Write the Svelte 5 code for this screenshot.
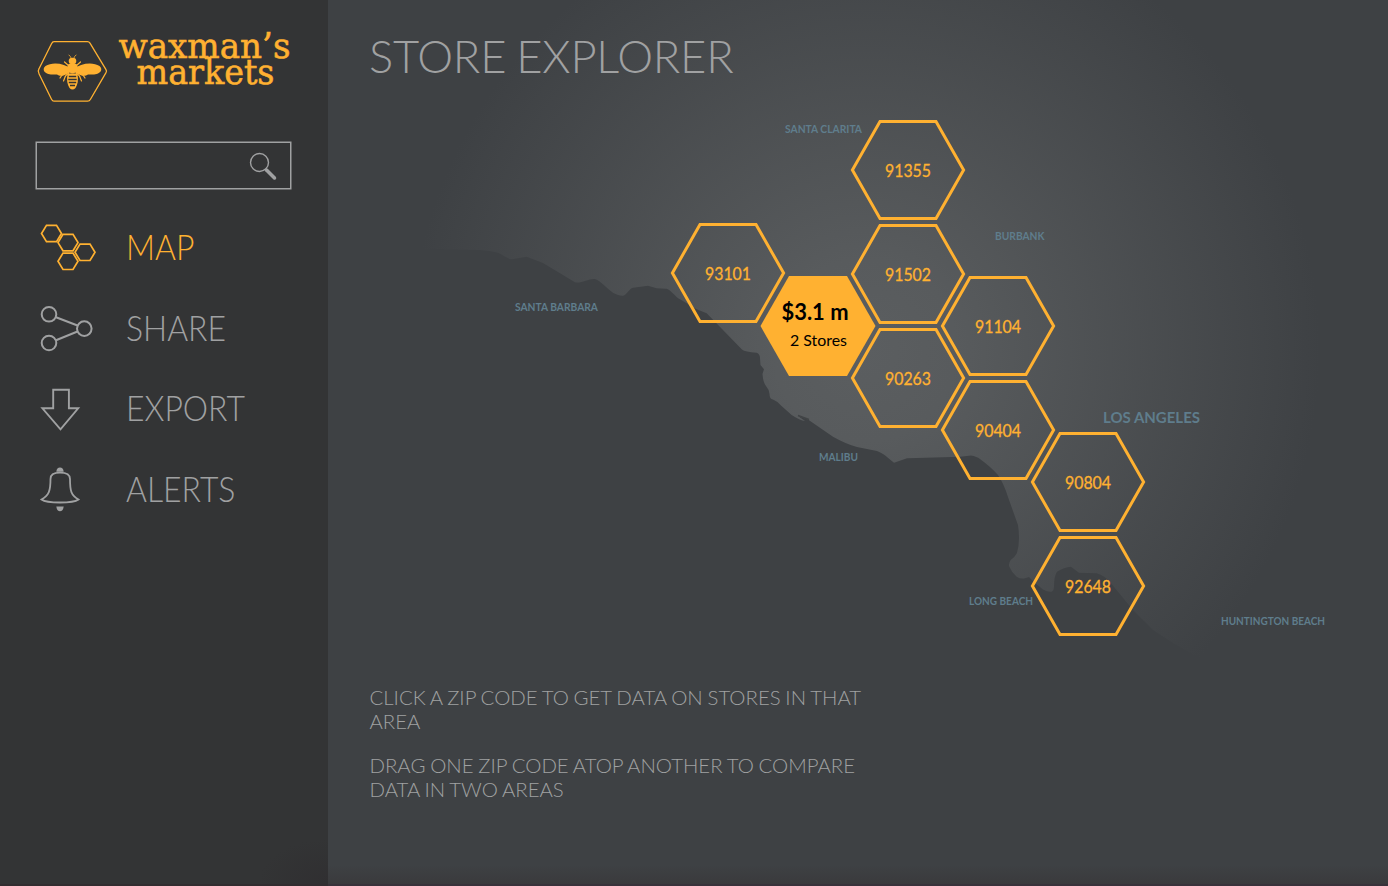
<script>
  const nav = [
    { id: 'map', label: 'MAP' },
    { id: 'share', label: 'SHARE' },
    { id: 'export', label: 'EXPORT' },
    { id: 'alerts', label: 'ALERTS' }
  ];
  const zips = [
    { zip: '93101', x: 728, y: 273 },
    { zip: '91355', x: 908, y: 170 },
    { zip: '91502', x: 908, y: 274 },
    { zip: '91104', x: 998, y: 326 },
    { zip: '90263', x: 908, y: 378 },
    { zip: '90404', x: 998, y: 430 },
    { zip: '90804', x: 1088, y: 482 },
    { zip: '92648', x: 1088, y: 586 }
  ];
  const cities = [
    { name: 'SANTA CLARITA', x: 785, y: 132.5, w: 77, s: 10.5 },
    { name: 'BURBANK', x: 995, y: 239.5, w: 49.5, s: 10.5 },
    { name: 'SANTA BARBARA', x: 515, y: 311, w: 83, s: 10.5 },
    { name: 'MALIBU', x: 819, y: 461, w: 39, s: 11 },
    { name: 'LONG BEACH', x: 969, y: 604.5, w: 64, s: 10.5 },
    { name: 'LOS ANGELES', x: 1103, y: 423, w: 97, s: 15 },
    { name: 'HUNTINGTON BEACH', x: 1221, y: 625, w: 104, s: 10.5 }
  ];
  let active = $state('map');
</script>

<div class="app">
  <aside>
    <svg class="logo" viewBox="0 0 260 82" width="260" height="82">
      <path d="M18 19H51.5Q53 19 54 20.5L70 47Q71 48.500 70 50L54.500 76.500Q53.500 78.500 51.500 78.500H18Q16.500 78.500 15.500 76.500L3 51Q1.500 48.500 3 46L15.500 21Q16.500 19 18 19Z" transform="translate(0 .7)" fill="none" stroke="#ffb131" stroke-width="1.300" />
      <g transform="translate(0 .5)">
        <g fill="#ffb131">
          <path d="M36 46.500C28 40.500 16 39 9.500 43.500C6.500 46 7.500 49.500 11 51C15 53 19 51.500 21 52C25 55 31 52.500 36 48Z" />
          <path d="M37 46.500C45 40.500 57 39 63.500 43.500C66.500 46 65.500 49.500 62 51C58 53 54 51.500 52 52C48 55 42 52.500 37 48Z" />
          <ellipse cx="36.500" cy="38.500" rx="3.800" ry="3.200" />
          <path d="M32 42Q36.500 39.500 41 42Q43 48 38.500 50.500H34.500Q30 48 32 42Z" />
          <path d="M31.500 51.500Q36.500 50 41.500 51.500Q43 60 39.500 65.500Q36.500 68.500 33.500 65.500Q30 60 31.500 51.500Z" />
        </g>
        <g fill="none" stroke="#333435" stroke-width="1.300"><path d="M32.800 54H40.200M32.300 57H40.700M32.800 60H40.200M34 63H39" /></g>
        <g fill="none" stroke="#ffb131" stroke-width="1.200" stroke-linecap="round">
          <path stroke-width=".8" d="M35.500 36.500Q35 34 33 32.500M37.500 36.500Q38 34 40 32.500" />
          <path d="M32.500 43L28.500 39.500M40.500 43L44.500 39.500M32 49Q26.500 51 24 55.500M41 49Q46.500 51 49 55.500M33 50.500Q29 53 28.500 56L27.500 58.500M40 50.500Q44 53 44.500 56L45.500 58.500" />
        </g>
      </g>
      <g class="wordmark">
        <text x="82.500" y="35.500" textLength="172" lengthAdjust="spacingAndGlyphs">waxman’s</text>
        <text x="100.500" y="62" textLength="138" lengthAdjust="spacingAndGlyphs">markets</text>
      </g>
    </svg>

    <label class="search">
      <input type="text" aria-label="Search" />
      <svg width="30" height="30" viewBox="0 0 30 30" fill="none" stroke="#a0a1a2">
        <circle cx="11.500" cy="11.500" r="9" stroke-width="1.400" />
        <path d="M18.500 19L26.500 27" stroke-width="3.500" stroke-linecap="round" />
      </svg>
    </label>

    <nav>
      {#each nav as item}
        <button class:active={active === item.id} onclick={() => (active = item.id)}>
          <svg width="60" height="50" viewBox="0 0 60 50" fill="none" stroke="currentColor">
            {#if item.id === 'map'}
              <g stroke-width="1.700">
                {#each [[12.500, 12.500], [29, 21.600], [46, 31.300], [29, 40.300]] as [x, y]}
                  <path transform="translate({x} {y})" d="M-5 -8.200H5L10 0L5 8.200H-5L-10 0Z" />
                {/each}
              </g>
            {:else if item.id === 'share'}
              <g stroke-width="2">
                <circle cx="10" cy="12.300" r="7.300" />
                <circle cx="45.300" cy="26.600" r="7.300" />
                <circle cx="10" cy="41" r="7.300" />
                <path d="M17 15.300L38.500 23.500M17 38.200L38.500 29.500" />
              </g>
            {:else if item.id === 'export'}
              <path stroke-width="1.900" d="M14.200 7.800H29.900V26.300H39.200L21.500 47.300L3.400 26.300H14.200Z" />
            {:else}
              <path stroke-width="1.800" d="M21 9.700C14 9.700 11.500 12 11.500 16C11.500 28 10 32 2.500 36.500C8 40.500 34 40.500 39.500 36.500C32 32 31 28 31 16C31 12 28 9.700 21 9.700Z" />
              <path fill="currentColor" stroke="none" d="M17.300 8.700Q17.800 4.500 21 4.500T24.700 8.700ZM17.300 43.500H24.700Q24 48.300 21 48.300T17.300 43.500Z" />
            {/if}
          </svg>
          <span>{item.label}</span>
        </button>
      {/each}
    </nav>
  </aside>

  <main>
    <svg class="map" viewBox="328 0 1060 886" width="1060" height="886">
      <defs>
        <radialGradient id="glow" gradientUnits="userSpaceOnUse" cx="865" cy="350" r="455">
          <stop offset="0" stop-color="#5b5e60" />
          <stop offset=".2" stop-color="#585b5d" />
          <stop offset="1" stop-color="#3e4144" />
        </radialGradient>
      </defs>
      <path fill="url(#glow)" d="M328 249H427L480 250Q490 250.500 498 252.700C503 255 507 258.500 511.700 259.300L526.700 256.700L543 263L575 282.300C582 283.500 589 278 595 279C601 281 606 288 613 292.700Q619 296 623 295.700C627 295 629 288.500 633 287.700L648 285.700L656.700 288.300L666.700 288.700C671 290 675 296.500 680 299.300L696.700 309.300L706.700 313.300L742 349.500Q745 352 756.700 352.700Q760 354 760 358L760.500 365L764 369.300L762.500 374Q763 382 766 386Q769.500 390 769.500 394Q769.500 399 773 399.500Q777 401 781 405.500L791.700 415Q800 420.500 805 421L798 416L808 419.500L833 436.700Q846 444 857 447L877 451Q884 454 887 457L894 462.700L907 458.300L960 456.700L971 455.500Q977 456.500 980 459Q991 467 998 475Q1004 484 1008 497L1018 525Q1020.500 541 1017 553Q1015 557 1010.700 560Q1008 564 1009.500 567Q1012 573 1016.700 576.700Q1020 579 1024 578.500L1029 577L1035 583Q1040 587 1043 589.500Q1049 592.500 1052 591.500Q1054 590 1054 586.700Q1054 576 1057 571.700Q1064 567 1071 566.700L1079 572.700L1096.700 573.300Q1105 576 1110 582L1133 610L1153 630L1173 643L1197 656.700L1230 675H1388V0H328Z" />
      <path d="M798 415.500L809 419.500" stroke="#414446" stroke-width="1.500" />
      <g class="cities">
        {#each cities as c}
          <text x={c.x} y={c.y} font-size={c.s} textLength={c.w} lengthAdjust="spacingAndGlyphs">{c.name}</text>
        {/each}
      </g>
      {#each zips as z}
        <g class="hex" transform="translate({z.x} {z.y})">
          <path d="M-28 -48.500H28L55.600 0L28 48.500H-28L-55.600 0Z" />
          <text y="6.500" textLength="46" lengthAdjust="spacingAndGlyphs">{z.zip}</text>
        </g>
      {/each}
      <g class="selected" transform="translate(818 326)">
        <path d="M-29 -50H29L57.500 0L29 50H-29L-57.500 0Z" />
        <text class="sales" x="-3" y="-6" textLength="67" lengthAdjust="spacingAndGlyphs">$3.1 m</text>
        <text class="stores" x="0.500" y="20" textLength="57" lengthAdjust="spacingAndGlyphs">2 Stores</text>
      </g>
    </svg>
    <h1>STORE EXPLORER</h1>
    <section class="help">
      <p>CLICK A ZIP CODE TO GET DATA ON STORES IN THAT AREA</p>
      <p>DRAG ONE ZIP CODE ATOP ANOTHER TO COMPARE DATA IN TWO AREAS</p>
    </section>
  </main>
</div>

<style>
  :global(body) { margin: 0; background: #3e4144; }
  .app { display: flex; width: 1388px; height: 886px; overflow: hidden; font-family: Lato, sans-serif; }
  aside { flex: none; box-sizing: border-box; width: 328px; padding: 22px 36px 0; background: radial-gradient(ellipse 70px 45px at 328px 884px, #302f31, #333435) #333435; display: flex; flex-direction: column; border-bottom: 2px solid #322d30; }
  .logo { display: block; flex: none; overflow: visible; }
  .wordmark { font-family: "DejaVu Serif", serif; font-size: 36px; fill: #ffb131; stroke: #ffb131; stroke-width: .6; }
  .search { box-sizing: border-box; display: flex; align-items: center; width: 255px; height: 47px; margin-top: 38px; margin-bottom: 1px; padding-right: 12px; border: 1px solid #a0a1a2; box-shadow: 0 0 0 .5px #a0a1a2; }
  input { flex: 1; min-width: 0; height: 100%; padding: 0 12px; border: 0; outline: 0; background: none; color: #a0a1a2; font: 300 20px Lato, sans-serif; }
  nav { display: flex; flex-direction: column; margin-top: 31px; }
  button { display: flex; align-items: flex-start; gap: 27.500px; height: 80.700px; padding: 0 0 0 2.500px; border: 0; background: none; color: #a0a1a2; text-align: left; font: 300 35px/50px Lato, sans-serif; }
  button svg { flex: none; }
  button span { transform: scaleX(.912); transform-origin: left; }
  button.active { color: #ffb131; }
  main { position: relative; box-sizing: border-box; flex: 1; display: flex; flex-direction: column; padding: 29px 42px 0; color: #a0a1a2; background: linear-gradient(#3e4144 0 865px, #3a3a3c 884px, #38323a 884px); }
  .map { position: absolute; inset: 0; clip-path: inset(0 0 30px 0); }
  h1 { position: relative; margin: 0 0 0 -1px; font: 300 45.300px/54px Lato, sans-serif; letter-spacing: -.2px; word-spacing: -2px; }
  .help { position: relative; width: 510px; margin: 602px 0 0 -.5px; font: 300 20.400px/24px Lato, sans-serif; word-spacing: -.8px; }
  p { margin: 0 0 20px; }
  .cities { fill: #5f7d8c; font-weight: 700; }
  .hex path { fill: none; stroke: #ffb131; stroke-width: 3; }
  .hex text { fill: #ffb131; stroke: #ffb131; stroke-width: .3; font-size: 17px; text-anchor: middle; }
  .selected path { fill: #ffb131; }
  .selected text { fill: #000; text-anchor: middle; }
  .selected .sales { font-size: 22px; font-weight: 700; }
  .selected .stores { font-size: 16px; }
</style>
